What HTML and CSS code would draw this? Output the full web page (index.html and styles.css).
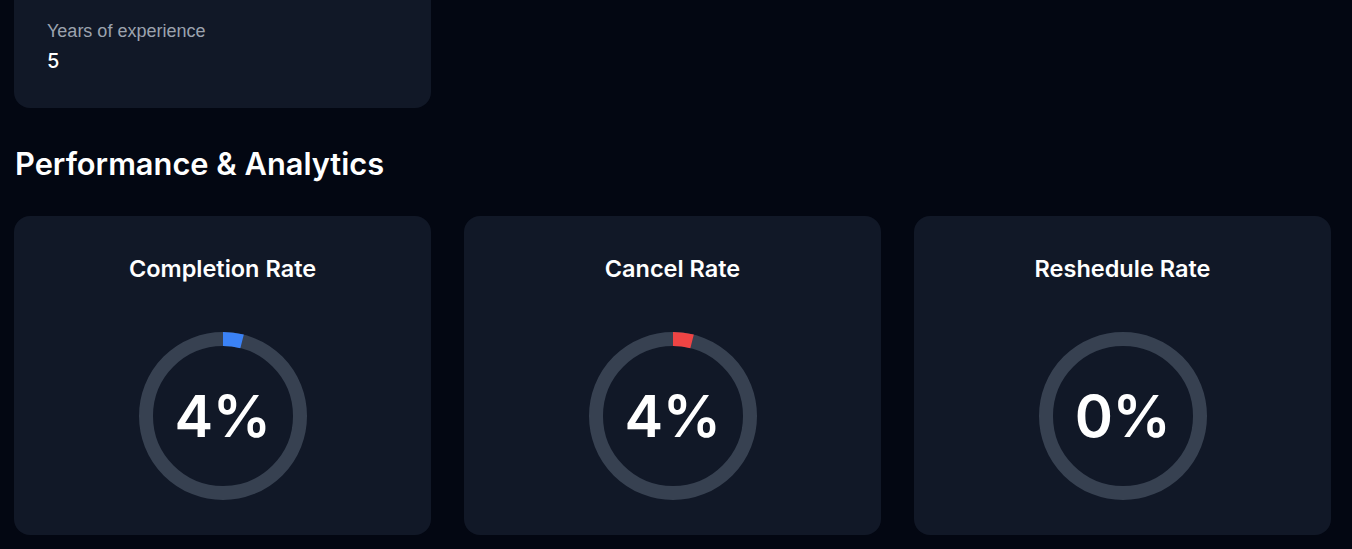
FILE: index.html
```html
<!DOCTYPE html>
<html lang="en">
<head>
<meta charset="utf-8">
<title>Performance &amp; Analytics</title>
<link rel="stylesheet" href="styles.css">
</head>
<body>
<main class="page">
  <section class="info-grid">
    <div class="info-card">
      <div class="info-label">Years of experience</div>
      <div class="info-value">5</div>
    </div>
  </section>

  <h2 class="section-title">Performance &amp; Analytics</h2>

  <section class="stats">
    <div class="stat-card">
      <h3 class="stat-title">Completion Rate</h3>
      <div class="ring">
        <svg class="ring-svg" viewBox="0 0 168 168" width="168" height="168">
          <circle cx="84" cy="84" r="77" class="ring-track"/>
          <circle cx="84" cy="84" r="77" class="ring-value ring-blue" stroke-dasharray="19.35 483.81"/>
        </svg>
        <span class="ring-text">4%</span>
      </div>
    </div>
    <div class="stat-card">
      <h3 class="stat-title">Cancel Rate</h3>
      <div class="ring">
        <svg class="ring-svg" viewBox="0 0 168 168" width="168" height="168">
          <circle cx="84" cy="84" r="77" class="ring-track"/>
          <circle cx="84" cy="84" r="77" class="ring-value ring-red" stroke-dasharray="19.35 483.81"/>
        </svg>
        <span class="ring-text">4%</span>
      </div>
    </div>
    <div class="stat-card">
      <h3 class="stat-title">Reshedule Rate</h3>
      <div class="ring">
        <svg class="ring-svg" viewBox="0 0 168 168" width="168" height="168">
          <circle cx="84" cy="84" r="77" class="ring-track"/>
        </svg>
        <span class="ring-text">0%</span>
      </div>
    </div>
  </section>
</main>
</body>
</html>
```

FILE: styles.css
```css
* { box-sizing: border-box; }

html, body {
  margin: 0;
  padding: 0;
  background: #030712;
  color: #ffffff;
  font-family: Inter, "Noto Sans", "DejaVu Sans", sans-serif;
  overflow: hidden;
}

.page {
  padding: 0 21px 0 14px;
  margin-top: -20px;
}

.info-grid {
  display: grid;
  grid-template-columns: repeat(3, 417px);
  gap: 33px;
}

.info-card {
  background: #111827;
  border-radius: 16px;
  padding: 40px 33px 34px;
  height: 128px;
}

.info-label {
  font-family: "Liberation Sans", Arial, sans-serif;
  font-size: 18px;
  line-height: 22px;
  color: #9ca3af;
}

.info-value {
  margin-top: 7px;
  font-size: 20px;
  line-height: 24px;
  font-weight: 500;
  color: #ffffff;
}

.section-title {
  margin: 36px 0 32px 1px;
  font-size: 30.8px;
  line-height: 40px;
  font-weight: 600;
}

.stats {
  display: grid;
  grid-template-columns: repeat(3, 417px);
  gap: 33px;
}

.stat-card {
  background: #111827;
  border-radius: 16px;
  padding: 38px 0 35px;
  display: flex;
  flex-direction: column;
  align-items: center;
}

.stat-title {
  margin: 0 0 48px;
  font-size: 23.5px;
  line-height: 30px;
  font-weight: 600;
}

.ring {
  position: relative;
  width: 168px;
  height: 168px;
}

.ring-svg {
  display: block;
  transform: rotate(-90deg);
}

.ring-track {
  fill: none;
  stroke: #374151;
  stroke-width: 14;
}

.ring-value {
  fill: none;
  stroke-width: 14;
}

.ring-blue { stroke: #3b82f6; }
.ring-red { stroke: #ef4444; }

.ring-text {
  position: absolute;
  inset: 0;
  display: flex;
  align-items: center;
  justify-content: center;
  font-size: 58px;
  font-weight: 600;
  letter-spacing: -0.5px;
}
```
